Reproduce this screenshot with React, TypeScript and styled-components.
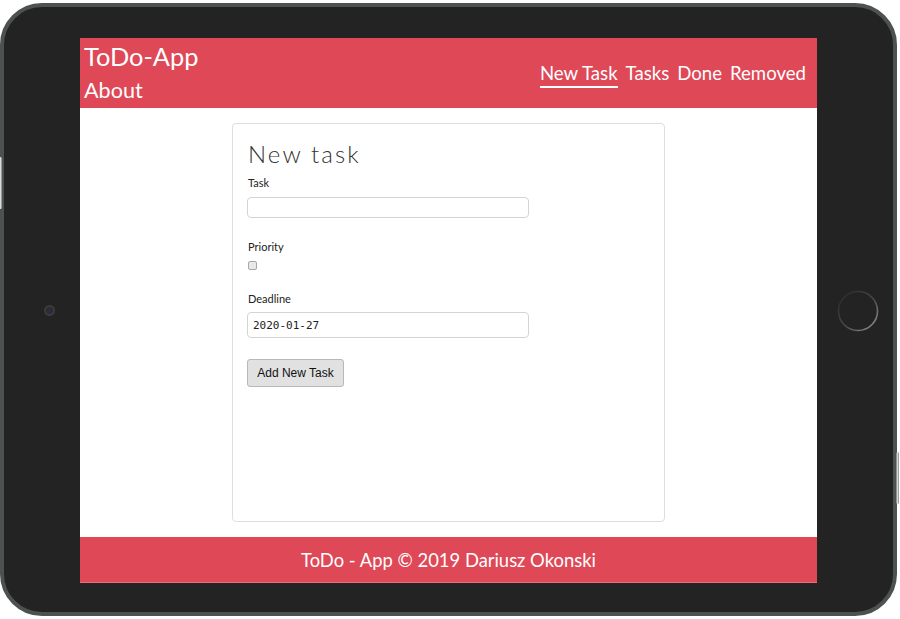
import React from "react";
import styled, { createGlobalStyle } from "styled-components";

const Global = createGlobalStyle`
  html, body { margin: 0; padding: 0; background: #ffffff; }
  body { font-family: Lato, "Open Sans", sans-serif; }
  * { box-sizing: border-box; }
`;

const RED = "#de4857";

const Page = styled.div`
  width: 900px;
  height: 619px;
  padding-top: 3px;
  overflow: hidden;
`;

const Tablet = styled.div`
  position: relative;
  width: 897px;
  height: 613px;
  border: 4px solid #4d5151;
  border-radius: 42px;
  background: #232323;
  display: flex;
  padding: 31px 0 29px 0;
`;

const SideButton = styled.div<{ $side: "left" | "right"; $top: number }>`
  position: absolute;
  top: ${(p) => p.$top}px;
  ${(p) => (p.$side === "left" ? "left: -5px;" : "right: -6px;")}
  width: 3px;
  height: 52px;
  border-radius: 2px;
  background: linear-gradient(90deg, #6b6f70, #d9d9d9, #7b7f80);
`;

const Bezel = styled.div<{ $offset: number }>`
  width: 76px;
  display: flex;
  align-items: center;
  justify-content: center;
  padding-left: ${(p) => p.$offset}px;
`;

const Camera = styled.div`
  width: 11px;
  height: 11px;
  border-radius: 50%;
  background: #2c2c30;
  border: 2px solid #3c3c3e;
  display: flex;
  align-items: center;
  justify-content: center;
  &::after {
    content: "";
    width: 4px;
    height: 4px;
    border-radius: 50%;
    background: #2d2a4a;
  }
`;

const Screen = styled.div`
  width: 737px;
  display: flex;
  flex-direction: column;
  background: #ffffff;
`;

const Header = styled.header`
  height: 70px;
  background: ${RED};
  display: flex;
  justify-content: space-between;
  align-items: flex-start;
  padding: 3px 11px 0 4px;
  color: #ffffff;
`;

const Brand = styled.div`
  display: flex;
  flex-direction: column;
`;

const Title = styled.div`
  font-size: 25.4px;
  line-height: 30px;
`;

const About = styled.div`
  font-size: 21.6px;
  line-height: 26px;
  margin-top: 6px;
`;

const Nav = styled.nav`
  display: flex;
  gap: 8px;
  padding-top: 20px;
`;

const NavLink = styled.span<{ $active?: boolean }>`
  font-size: 18.6px;
  line-height: 24px;
  padding-bottom: 1px;
  border-bottom: 2px solid ${(p) => (p.$active ? "#ffffff" : "transparent")};
`;

const Content = styled.main`
  flex: 1;
  display: flex;
  justify-content: center;
  padding: 15px 0;
`;

const Card = styled.section`
  width: 433px;
  border: 1px solid #dedede;
  border-radius: 4px;
  padding: 16px 14px;
  display: flex;
  flex-direction: column;
  align-items: flex-start;
`;

const CardTitle = styled.h1`
  margin: 0 0 0 1px;
  font-size: 24px;
  line-height: 28px;
  font-weight: 300;
  letter-spacing: 2.1px;
  color: #333333;
`;

const Label = styled.label<{ $gap?: number }>`
  font-size: 11px;
  line-height: 14px;
  color: #222222;
  margin-left: 1px;
  margin-top: ${(p) => p.$gap ?? 22}px;
`;

const TextInput = styled.input<{ $h: number; $gap: number }>`
  margin-top: ${(p) => p.$gap}px;
  width: 282px;
  height: ${(p) => p.$h}px;
  border: 1px solid #d4d4d4;
  border-radius: 4px;
  padding: 0 5px;
  font-family: "DejaVu Sans Mono", "Liberation Mono", monospace;
  font-size: 11px;
  color: #222222;
  background: #ffffff;
  outline: none;
`;

const Check = styled.input`
  appearance: none;
  margin: 7px 0 0 1px;
  width: 9px;
  height: 9px;
  border: 1px solid #a8a8a8;
  border-radius: 2px;
  background: #e9e9e9;
`;

const Button = styled.button`
  margin-top: 21px;
  width: 97px;
  height: 28px;
  border: 1px solid #b8b8b8;
  border-radius: 3px;
  background: #e1e1e1;
  font-family: "Liberation Sans", Arial, sans-serif;
  font-size: 12px;
  color: #111111;
  padding: 0;
`;

const Footer = styled.footer`
  height: 46px;
  background: ${RED};
  border-bottom: 1px solid #ef6d7a;
  color: #ffffff;
  display: flex;
  align-items: center;
  justify-content: center;
  font-size: 18.4px;
`;

const HomeButton = () => (
  <svg width="42" height="42" viewBox="0 0 42 42">
    <defs>
      <linearGradient id="hb" x1="0" y1="0" x2="1" y2="1">
        <stop offset="0" stopColor="#262626" />
        <stop offset="0.55" stopColor="#4a4a4a" />
        <stop offset="1" stopColor="#9a9a9a" />
      </linearGradient>
    </defs>
    <circle cx="21" cy="21" r="19.5" fill="none" stroke="url(#hb)" strokeWidth="1.6" />
  </svg>
);

export default function App() {
  return (
    <Page>
      <Global />
      <Tablet>
        <SideButton $side="left" $top={150} />
        <SideButton $side="right" $top={445} />
        <Bezel $offset={14}>
          <Camera />
        </Bezel>
        <Screen>
          <Header>
            <Brand>
              <Title>ToDo-App</Title>
              <About>About</About>
            </Brand>
            <Nav>
              <NavLink $active>New Task</NavLink>
              <NavLink>Tasks</NavLink>
              <NavLink>Done</NavLink>
              <NavLink>Removed</NavLink>
            </Nav>
          </Header>
          <Content>
            <Card>
              <CardTitle>New task</CardTitle>
              <Label $gap={8}>Task</Label>
              <TextInput type="text" $h={21} $gap={7} />
              <Label>Priority</Label>
              <Check type="checkbox" />
              <Label>Deadline</Label>
              <TextInput type="text" $h={26} $gap={6} value="2020-01-27" readOnly />
              <Button>Add New Task</Button>
            </Card>
          </Content>
          <Footer>ToDo - App © 2019 Dariusz Okonski</Footer>
        </Screen>
        <Bezel $offset={6}>
          <HomeButton />
        </Bezel>
      </Tablet>
    </Page>
  );
}
